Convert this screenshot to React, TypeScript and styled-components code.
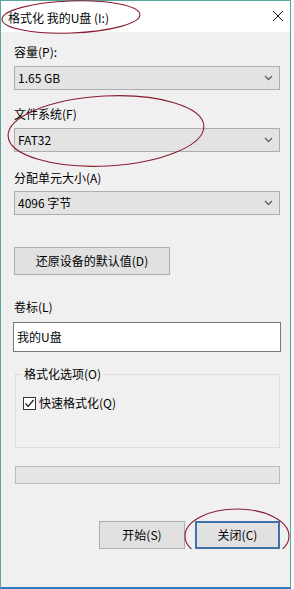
import React from "react";
import styled, { createGlobalStyle } from "styled-components";

const Global = createGlobalStyle`
  html, body { margin: 0; padding: 0; background: #f4f8f8; }
  body { font-family: "Microsoft YaHei", "Noto Sans CJK SC", "Noto Sans", sans-serif; font-size: 12px; color: #000; }
  * { box-sizing: border-box; }
`;

const Window = styled.div`
  position: relative;
  width: 291px;
  height: 589px;
  border: 1px solid #5aa69c;
  border-bottom: 2px solid #2f78c4;
  background: #f0f0f0;
  display: flex;
  flex-direction: column;
  overflow: hidden;
`;

const TitleBar = styled.div`
  height: 31px;
  background: #ffffff;
  display: flex;
  align-items: center;
  justify-content: space-between;
  padding: 0 6px 0 7px;
  flex-shrink: 0;
`;

const Title = styled.span`
  font-size: 12px;
  line-height: 16px;
  margin-top: 2px;
`;

const CloseX = styled.svg`
  width: 12px;
  height: 12px;
  margin-top: -2px;
`;

const Body = styled.div`
  flex: 1;
  display: flex;
  flex-direction: column;
  padding: 0 10px 0 13px;
`;

const Label = styled.div<{ $mt: number }>`
  margin-top: ${(p) => p.$mt}px;
  line-height: 16px;
  height: 16px;
`;

const Select = styled.div<{ $mt: number }>`
  margin-top: ${(p) => p.$mt}px;
  height: 24px;
  border: 1px solid #adadad;
  background: #e3e3e3;
  display: flex;
  align-items: center;
  justify-content: space-between;
  padding: 0 6px 0 3px;
  line-height: 16px;
`;

const Chevron = styled.svg`
  width: 9px;
  height: 6px;
`;

const Button = styled.div<{ $w: number; $default?: boolean }>`
  width: ${(p) => p.$w}px;
  height: 28px;
  background: #e1e1e1;
  border: ${(p) => (p.$default ? "2px solid #3f72a8" : "1px solid #adadad")};
  display: flex;
  align-items: center;
  justify-content: center;
  line-height: 16px;
`;

const ResetRow = styled.div`
  margin-top: 32px;
  display: flex;
`;

const Input = styled.div`
  margin-top: 7px;
  height: 30px;
  width: 268px;
  margin-left: -1px;
  border: 1px solid #7a7a7a;
  background: #ffffff;
  display: flex;
  align-items: center;
  padding-left: 3px;
  line-height: 16px;
`;

const Group = styled.fieldset`
  margin: 14px 0 0 1px;
  padding: 13px 0 0 7px;
  width: 265px;
  height: 82px;
  border: 1px solid #dcdcdc;
  min-width: 0;
`;

const Legend = styled.legend`
  padding: 0 2px;
  margin-left: -1px;
  line-height: 16px;
`;

const CheckRow = styled.label`
  display: flex;
  align-items: center;
  gap: 3px;
  line-height: 16px;
`;

const Box = styled.span`
  width: 13px;
  height: 13px;
  border: 1px solid #333333;
  background: #ffffff;
  display: flex;
  align-items: center;
  justify-content: center;
`;

const Progress = styled.div`
  margin: 18px 0 0 1px;
  width: 265px;
  height: 18px;
  border: 1px solid #bcbcbc;
  background: #e6e6e6;
`;

const ButtonRow = styled.div`
  margin-top: 37px;
  display: flex;
  justify-content: flex-end;
  gap: 10px;
`;

const Marks = styled.svg`
  position: absolute;
  left: 0;
  top: 0;
  width: 294px;
  height: 589px;
  pointer-events: none;
`;

const Arrow = () => (
  <Chevron viewBox="0 0 9 6">
    <path d="M1 1 L4.5 4.5 L8 1" fill="none" stroke="#606060" strokeWidth="1.3" />
  </Chevron>
);

export default function App() {
  return (
    <>
      <Global />
      <Window>
        <TitleBar>
          <Title>格式化 我的U盘 (I:)</Title>
          <CloseX viewBox="0 0 12 12">
            <path d="M1 1 L11 11 M11 1 L1 11" stroke="#111" strokeWidth="1" />
          </CloseX>
        </TitleBar>
        <Body>
          <Label $mt={12}>容量(P):</Label>
          <Select $mt={6}>
            <span>1.65 GB</span>
            <Arrow />
          </Select>
          <Label $mt={16}>文件系统(F)</Label>
          <Select $mt={6}>
            <span>FAT32</span>
            <Arrow />
          </Select>
          <Label $mt={18}>分配单元大小(A)</Label>
          <Select $mt={5}>
            <span>4096 字节</span>
            <Arrow />
          </Select>
          <ResetRow>
            <Button $w={156}>还原设备的默认值(D)</Button>
          </ResetRow>
          <Label $mt={24}>卷标(L)</Label>
          <Input>我的U盘</Input>
          <Group>
            <Legend>格式化选项(O)</Legend>
            <CheckRow>
              <Box>
                <svg width="11" height="11" viewBox="0 0 11 11">
                  <path d="M1.5 5.5 L4.2 8.3 L9.5 2" fill="none" stroke="#111" strokeWidth="1.2" />
                </svg>
              </Box>
              快速格式化(Q)
            </CheckRow>
          </Group>
          <Progress />
          <ButtonRow>
            <Button $w={86}>开始(S)</Button>
            <Button $w={85} $default>
              关闭(C)
            </Button>
          </ButtonRow>
        </Body>
      </Window>
      <Marks viewBox="0 0 294 589">
        <defs>
          <clipPath id="cut">
            <rect x="0" y="0" width="294" height="549" />
          </clipPath>
        </defs>
        <g fill="none" stroke="#8a1c30" strokeWidth="1.1">
          <ellipse cx="71" cy="17" rx="69" ry="16" transform="rotate(-2 71 17)" />
          <ellipse cx="106" cy="131" rx="98" ry="35" transform="rotate(-3 106 131)" />
          <ellipse cx="237" cy="536" rx="52" ry="27" clipPath="url(#cut)" />
        </g>
      </Marks>
    </>
  );
}
